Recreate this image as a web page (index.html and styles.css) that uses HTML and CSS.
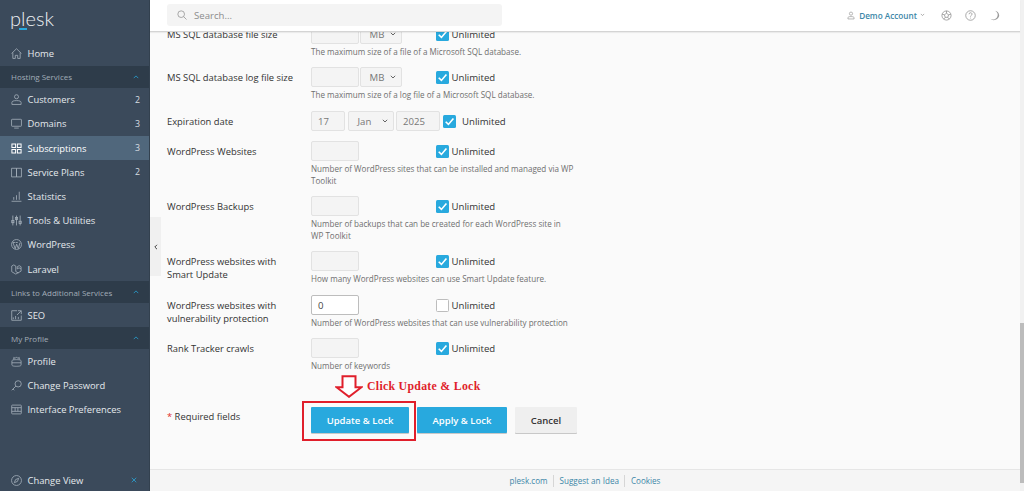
FILE: index.html
```html
<!DOCTYPE html>
<html lang="en">
<head>
<meta charset="utf-8">
<title>Plesk</title>
<link rel="stylesheet" href="styles.css">
</head>
<body>
<aside class="sidebar">
  <div class="logo"><span class="logo-text">plesk</span><span class="logo-bar"></span></div>
  <a class="item"><svg class="ic" viewBox="0 0 12 12"><path d="M.6 6 6 .8 11.4 6M2 5v6.400h2.700V8h2.600v3.400H10V5"/></svg><span class="name">Home</span></a>
  <div class="section"><span>Hosting Services</span><svg class="caret" viewBox="0 0 8 5"><path d="M1 4 4 1l3 3"/></svg></div>
  <a class="item"><svg class="ic" viewBox="0 0 12 12"><circle cx="6" cy="3" r="2.200"/><path d="M1 11.400V9.200C1 8 2.400 7.200 6 7.200s5 .8 5 2v2.200z"/></svg><span class="name">Customers</span><span class="count">2</span></a>
  <a class="item"><svg class="ic" viewBox="0 0 12 12"><rect x=".6" y="1.400" width="10.800" height="7.600" rx=".6"/><path d="M3.500 11h5"/></svg><span class="name">Domains</span><span class="count">3</span></a>
  <a class="item active"><svg class="ic solid" viewBox="0 0 12 12"><path d="M1 1h4v4H1zM7 1h4v4H7zM1 7h4v4H1zM7 7h4v4H7z"/></svg><span class="name">Subscriptions</span><span class="count">3</span></a>
  <a class="item"><svg class="ic" viewBox="0 0 12 12"><path d="M.6 1.400H6v9.400H.6zM6 1.400h5.400v9.400H6z"/></svg><span class="name">Service Plans</span><span class="count">2</span></a>
  <a class="item"><svg class="ic" viewBox="0 0 12 12"><path d="M.6 11.200h10.800M3 9.600V6.600M6 9.600V4.600M9 9.600V.8"/></svg><span class="name">Statistics</span></a>
  <a class="item"><svg class="ic" viewBox="0 0 12 12"><path d="M2 .6v10.800M6 .6v10.800M10 .6v10.800"/><rect x=".8" y="6" width="2.400" height="2.400"/><rect x="4.800" y="2.600" width="2.400" height="2.400"/><rect x="8.800" y="6.800" width="2.400" height="2.400"/></svg><span class="name">Tools &amp; Utilities</span></a>
  <a class="item"><svg class="ic" viewBox="0 0 12 12"><circle cx="6" cy="6" r="5.400"/><path d="M2.200 4 4.600 10.600 6.200 5.600 8 10.400 9.800 4M1.800 3.800h2.600M5 3.800h2.400"/></svg><span class="name">WordPress</span></a>
  <a class="item"><svg class="ic" viewBox="0 0 12 12"><path d="M.8 2.200 3 1l2.200 1.200v6L8 9.800M.8 2.200v6.200L5.200 11l5.800-3.200V5.400L8.800 4.200 6.800 5.400V3L9 1.800 11 3v2.400"/></svg><span class="name">Laravel</span></a>
  <div class="section"><span>Links to Additional Services</span><svg class="caret" viewBox="0 0 8 5"><path d="M1 4 4 1l3 3"/></svg></div>
  <a class="item"><svg class="ic" viewBox="0 0 12 12"><path d="M6.500.8H.8v10.400h10.400V6M7.500.8h3.700v3.700M11 1 6.500 5.500M2.500 10V8M5 10V6.500M8 10V7.500"/></svg><span class="name">SEO</span></a>
  <div class="section"><span>My Profile</span><svg class="caret" viewBox="0 0 8 5"><path d="M1 4 4 1l3 3"/></svg></div>
  <a class="item"><svg class="ic" viewBox="0 0 12 12"><path d="M3 4V1.600l1.600 1L6 1l1.400 1.600L9 1.600V4M1 5.400C1 4.600 2 4 6 4s5 .6 5 1.400v4.200c0 1-1 1.600-5 1.600s-5-.6-5-1.600zM1 7.400h10"/></svg><span class="name">Profile</span></a>
  <a class="item"><svg class="ic" viewBox="0 0 12 12"><circle cx="7.800" cy="4.200" r="3.400"/><path d="M5.400 6.600.8 11.200M2.200 9.800l1.400 1.400"/></svg><span class="name">Change Password</span></a>
  <a class="item"><svg class="ic" viewBox="0 0 12 12"><rect x=".8" y="1.200" width="10.400" height="9.600" rx=".6"/><path d="M.8 4h10.400M.8 8h10.400M4.500 4v4M7.500 4v4"/></svg><span class="name">Interface Preferences</span></a>
  <a class="item last"><svg class="ic" viewBox="0 0 12 12"><circle cx="6" cy="6" r="5.400"/><path d="M8.400 3.600 5 5 3.600 8.400 7 7z"/></svg><span class="name">Change View</span><svg class="pin" viewBox="0 0 8 8"><path d="M1 1l6 6M7 1 1 7"/></svg></a>
</aside>
<main class="main">
  <header class="topbar">
    <div class="search"><svg class="search-ic" viewBox="0 0 12 12"><circle cx="5" cy="5" r="4"/><path d="M8 8l3.400 3.400"/></svg><span>Search...</span></div>
    <div class="account">
      <svg class="acc-ic" viewBox="0 0 12 12"><circle cx="6" cy="3.200" r="2.400"/><path d="M1.400 11.200V9.400C1.400 8.200 3 7.600 6 7.600s4.600.6 4.600 1.800v1.800z"/></svg>
      <span class="acc-name">Demo Account</span>
      <svg class="acc-caret" viewBox="0 0 6 4"><path d="M1 1l2 2 2-2"/></svg>
      <svg class="tool" viewBox="0 0 12 12"><circle cx="6" cy="6" r="5"/><path d="M6 3.600 8.300 5.200 7.400 8H4.600l-.9-2.800zM6 1v2.600M1.200 4.600l2.500.6M10.800 4.600l-2.500.6M3 10l1.600-2M9 10 7.400 8"/></svg>
      <svg class="tool" viewBox="0 0 12 12"><circle cx="6" cy="6" r="5.200"/><path d="M4.400 4.600C4.400 3.600 5.100 3 6 3s1.700.6 1.700 1.500C7.700 5.800 6 5.800 6 7.200M6 8.400v.8"/></svg>
      <svg class="tool moon" viewBox="0 0 12 12"><path d="M6.500.8c2.900 1.200 3.900 4.700 2.100 7.300-1.500 2.100-4.400 2.900-7.100 1.500 3 3 8.500 1.200 9.500-2.700C11.600 4 9.500 1.200 6.500.8z"/></svg>
    </div>
  </header>
  <div class="viewport">
    <button class="collapse" type="button"><svg viewBox="0 0 4 6"><path d="M3 .8.800 3 3 5.200"/></svg></button>
    <form class="form">
      <div class="row r0">
        <div class="label">MS SQL database file size</div>
        <div class="fields">
          <div class="line"><span class="inp"></span><span class="sel">MB<svg class="chev" viewBox="0 0 6 4"><path d="M.8.800 3 3 5.200.800"/></svg></span><span class="chk on"><svg viewBox="0 0 12 12"><path d="M2.500 6.200 5 8.700l4.600-5.400"/></svg></span><span class="unl">Unlimited</span></div>
          <div class="hint">The maximum size of a file of a Microsoft SQL database.</div>
        </div>
      </div>
      <div class="row r1">
        <div class="label">MS SQL database log file size</div>
        <div class="fields">
          <div class="line"><span class="inp"></span><span class="sel">MB<svg class="chev" viewBox="0 0 6 4"><path d="M.8.800 3 3 5.200.800"/></svg></span><span class="chk on"><svg viewBox="0 0 12 12"><path d="M2.500 6.200 5 8.700l4.600-5.400"/></svg></span><span class="unl">Unlimited</span></div>
          <div class="hint">The maximum size of a log file of a Microsoft SQL database.</div>
        </div>
      </div>
      <div class="row r-date">
        <div class="label">Expiration date</div>
        <div class="fields">
          <div class="line date"><span class="inp day">17</span><span class="sel mon">Jan<svg class="chev" viewBox="0 0 6 4"><path d="M.8.800 3 3 5.200.800"/></svg></span><span class="inp year">2025</span><span class="chk on"><svg viewBox="0 0 12 12"><path d="M2.500 6.200 5 8.700l4.600-5.400"/></svg></span><span class="unl">Unlimited</span></div>
        </div>
      </div>
      <div class="row r-wp">
        <div class="label">WordPress Websites</div>
        <div class="fields">
          <div class="line"><span class="inp wide"></span><span class="chk on"><svg viewBox="0 0 12 12"><path d="M2.500 6.200 5 8.700l4.600-5.400"/></svg></span><span class="unl">Unlimited</span></div>
          <div class="hint narrow">Number of WordPress sites that can be installed and managed via WP Toolkit</div>
        </div>
      </div>
      <div class="row r-wp">
        <div class="label">WordPress Backups</div>
        <div class="fields">
          <div class="line"><span class="inp wide"></span><span class="chk on"><svg viewBox="0 0 12 12"><path d="M2.500 6.200 5 8.700l4.600-5.400"/></svg></span><span class="unl">Unlimited</span></div>
          <div class="hint narrow">Number of backups that can be created for each WordPress site in WP Toolkit</div>
        </div>
      </div>
      <div class="row r-smart">
        <div class="label">WordPress websites with Smart Update</div>
        <div class="fields">
          <div class="line"><span class="inp wide"></span><span class="chk on"><svg viewBox="0 0 12 12"><path d="M2.500 6.200 5 8.700l4.600-5.400"/></svg></span><span class="unl">Unlimited</span></div>
          <div class="hint">How many WordPress websites can use Smart Update feature.</div>
        </div>
      </div>
      <div class="row r-vuln">
        <div class="label">WordPress websites with vulnerability protection</div>
        <div class="fields">
          <div class="line"><span class="inp wide live">0</span><span class="chk"></span><span class="unl">Unlimited</span></div>
          <div class="hint">Number of WordPress websites that can use vulnerability protection</div>
        </div>
      </div>
      <div class="row r-rank">
        <div class="label">Rank Tracker crawls</div>
        <div class="fields">
          <div class="line"><span class="inp wide"></span><span class="chk on"><svg viewBox="0 0 12 12"><path d="M2.500 6.200 5 8.700l4.600-5.400"/></svg></span><span class="unl">Unlimited</span></div>
          <div class="hint">Number of keywords</div>
        </div>
      </div>
      <div class="actions">
        <div class="req"><span class="star">*</span> Required fields</div>
        <div class="btns">
          <button class="btn primary" type="button">Update &amp; Lock</button>
          <button class="btn primary" type="button">Apply &amp; Lock</button>
          <button class="btn plain" type="button">Cancel</button>
        </div>
      </div>
    </form>
    <div class="mark-box"></div>
    <svg class="mark-arrow" viewBox="0 0 28 23"><path d="M7.500 1.200h13v11h6L14 21.800 1.500 12.200h6z"/></svg>
    <div class="mark-text">Click Update &amp; Lock</div>
  </div>
  <footer class="footer">
    <a>plesk.com</a><a>Suggest an Idea</a><a>Cookies</a>
  </footer>
</main>
<div class="scrollbar"><div class="thumb"></div></div>
</body>
</html>
```
FILE: styles.css
```css
* { box-sizing: border-box; }
html, body { margin: 0; height: 100%; overflow: hidden; }
body {
  display: flex;
  height: 491px;
  font-family: "Open Sans", sans-serif;
  font-size: 10px;
  color: #333;
  background: #fafafa;
}
.sidebar {
  width: 150px;
  flex: none;
  display: flex;
  flex-direction: column;
  background: #3b4a5b;
  color: #e4e8ec;
  border-right: 1px solid #33414f;
}
.logo { height: 41.500px; position: relative; padding: 6px 0 0 10px; }
.logo-text {
  font-family: "Lato", sans-serif;
  font-weight: 300;
  font-size: 20px;
  line-height: 24px;
  letter-spacing: 0;
  color: #eef1f4;
}
.logo-bar {
  position: absolute;
  left: 19px;
  top: 28px;
  width: 8px;
  height: 1.500px;
  background: #28a9de;
}
.item {
  display: flex;
  align-items: center;
  height: 24.200px;
  padding: 0 9px 0 11px;
  font-size: 9.400px;
  flex: none;
}
.item.active { background: #50677c; color: #fff; }
.item.last { margin-top: auto; height: 22px; }
.ic {
  width: 11px;
  height: 11px;
  margin-right: 5.500px;
  flex: none;
  fill: none;
  stroke: #a3aeb9;
  stroke-width: .9;
}
.ic.solid { stroke: #fff; stroke-width: 1.100; }
.name { flex: 1; }
.count { font-size: 8.800px; color: #d8dde2; }
.pin { width: 6px; height: 6px; fill: none; stroke: #28a9de; stroke-width: 1; margin-right: 3px; }
.section {
  display: flex;
  align-items: center;
  justify-content: space-between;
  height: 22px;
  padding: 0 10px 0 11px;
  background: #2e3c4a;
  color: #a2adb8;
  font-size: 8px;
  flex: none;
}
.caret { width: 6px; height: 4px; fill: none; stroke: #28a9de; stroke-width: 1; }
.main {
  flex: 1;
  min-width: 0;
  display: flex;
  flex-direction: column;
}
.topbar {
  height: 32px;
  flex: none;
  display: flex;
  align-items: center;
  justify-content: space-between;
  padding: 0 0 1px 17px;
  background: #fff;
  border-bottom: 1px solid #d4d4d4;
  box-shadow: 0 1px 1px rgba(0,0,0,.06);
  position: relative;
  z-index: 2;
}
.search {
  width: 335px;
  height: 22px;
  display: flex;
  align-items: center;
  padding-left: 10px;
  border-radius: 3px;
  background: #f4f4f4;
  color: #8c8c8c;
  font-size: 9.600px;
}
.search-ic { width: 10px; height: 10px; margin-right: 7px; fill: none; stroke: #8e8e8e; stroke-width: .9; }
.account { display: flex; align-items: center; padding-right: 20px; }
.acc-ic { width: 8px; height: 9px; margin-right: 4px; fill: none; stroke: #8a8a8a; stroke-width: .9; }
.acc-name { font-size: 8.200px; font-weight: 600; color: #3d87a8; margin-right: 3px; }
.acc-caret { width: 5px; height: 3.500px; margin-right: 16px; fill: none; stroke: #888; stroke-width: .8; }
.tool { width: 11px; height: 11px; margin-right: 13px; fill: none; stroke: #8a8a8a; stroke-width: .8; }
.tool.moon { margin-right: 0; fill: #9a9a9a; stroke: none; }
.viewport { flex: 1; min-height: 0; position: relative; overflow: hidden; background: #fafafa; }
.collapse {
  position: absolute;
  left: 0;
  top: 185px;
  width: 11px;
  height: 59px;
  padding: 0;
  border: 0;
  background: #f0f0f0;
  display: flex;
  align-items: center;
  justify-content: center;
}
.collapse svg { width: 4px; height: 6px; fill: none; stroke: #444; stroke-width: 1; }
.form { margin-top: -8px; padding-left: 17px; }
.row { display: flex; align-items: flex-start; }
.r0 { height: 43px; }
.r1 { height: 44px; }
.r-date { height: 30px; }
.r-wp { height: 55px; }
.r-smart { height: 44px; }
.r-vuln { height: 43px; }
.r-rank { height: 69px; }
.label {
  width: 144px;
  flex: none;
  padding-top: 3.500px;
  font-size: 9.400px;
  line-height: 13.500px;
  color: #333;
  padding-right: 8px;
}
.fields { flex: 1; }
.line { display: flex; align-items: center; height: 20px; }
.inp {
  width: 48px;
  height: 19.500px;
  flex: none;
  display: flex;
  align-items: center;
  padding-left: 6px;
  background: #f4f4f4;
  border: 1px solid #e2e2e2;
  border-radius: 2px;
  font-size: 9.600px;
  color: #777;
}
.inp.wide { margin-right: 76.500px; }
.inp.live { background: #fff; border-color: #bdbdbd; color: #444; }
.inp.day { width: 34px; }
.inp.year { width: 44px; margin-right: 3px; }
.sel {
  width: 42px;
  height: 19.500px;
  margin: 0 33.500px 0 1px;
  flex: none;
  display: flex;
  align-items: center;
  justify-content: space-between;
  padding: 0 5px 0 8.500px;
  background: #f4f4f4;
  border: 1px solid #e2e2e2;
  border-radius: 2px;
  color: #777;
  font-size: 9.600px;
}
.sel.mon { width: 46px; margin: 0 2px 0 3px; }
.chev { width: 6px; height: 4px; fill: none; stroke: #555; stroke-width: .9; }
.chk {
  width: 13px;
  height: 13px;
  flex: none;
  margin-right: 3px;
  border-radius: 1.500px;
  background: #fff;
  border: 1px solid #bdbdbd;
}
.chk.on { background: #28a9de; border: 0; }
.chk svg { display: block; width: 13px; height: 13px; fill: none; stroke: #fff; stroke-width: 1.500; }
.date .chk { margin-right: 6px; }
.unl { font-size: 9.600px; color: #333; }
.hint {
  margin-top: 2px;
  font-size: 8.080px;
  line-height: 12px;
  color: #6f6f6f;
}
.hint.narrow { width: 263px; }
.actions { display: flex; }
.req { width: 144px; padding-top: 3px; font-size: 9.400px; color: #333; }
.star { color: #e02b2b; }
.btns { display: flex; gap: 8px; }
.btn {
  height: 26px;
  border: 0;
  border-radius: 1px;
  font-family: inherit;
  font-size: 9.500px;
  font-weight: 600;
  padding: 0;
  box-shadow: 0 1px 0 rgba(0,0,0,.2);
}
.btn.primary { background: #28a9de; color: #fff; width: 98px; }
.btn.primary + .btn.primary { width: 90px; }
.btn.plain { background: #efefef; color: #333; width: 62px; }
.mark-box {
  position: absolute;
  left: 152px;
  top: 369px;
  width: 114px;
  height: 40px;
  border: 2px solid #e01f2b;
}
.mark-arrow {
  position: absolute;
  left: 185px;
  top: 343px;
  width: 28px;
  height: 23px;
  fill: #fff;
  stroke: #e01f2b;
  stroke-width: 2;
}
.mark-text {
  position: absolute;
  left: 217px;
  top: 347px;
  font-family: "Liberation Serif", serif;
  font-weight: 700;
  font-size: 11.800px;
  line-height: 14px;
  letter-spacing: .3px;
  color: #e01f2b;
  white-space: nowrap;
}
.footer {
  height: 22px;
  flex: none;
  display: flex;
  justify-content: center;
  align-items: center;
  background: #f5f5f5;
  border-top: 1px solid #e6e6e6;
  font-size: 8.100px;
  color: #3d87a8;
}
.footer a { padding: 0 5.500px; border-left: 1px solid #d6d6d6; line-height: 12px; }
.footer a:first-child { border-left: 0; }
.scrollbar { width: 4px; flex: none; background: #f1f1f1; position: relative; }
.thumb { position: absolute; left: 0; right: 0; top: 323px; height: 160px; background: #bcbcbc; }
```
